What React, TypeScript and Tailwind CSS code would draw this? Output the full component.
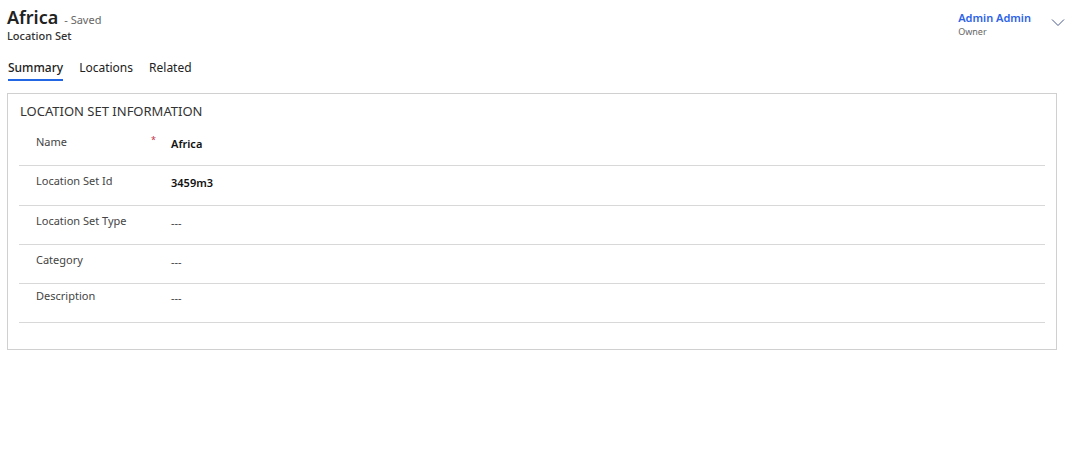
import React from "react";

const rows = [
  { label: "Name", value: "Africa", required: true, strong: true, h: "h-[39px] pt-[7px]" },
  { label: "Location Set Id", value: "3459m3", strong: true, h: "h-[40px] pt-[7px]" },
  { label: "Location Set Type", value: "---", h: "h-[39px] pt-[7px]" },
  { label: "Category", value: "---", h: "h-[39px] pt-[7px]" },
  { label: "Description", value: "---", h: "h-[39px] pt-[4px]" },
];

export default function App() {
  return (
    <div className="w-full h-[470px] bg-white text-[#333] font-['Noto_Sans',sans-serif]">
      <div className="flex justify-between pl-[7px] pr-[12px] pt-[5px]">
        <div>
          <div className="flex items-baseline gap-[6px]">
            <span className="text-[18px] font-semibold leading-[24px] text-[#222]">Africa</span>
            <span className="text-[11px] text-[#666]">- Saved</span>
          </div>
          <div className="text-[11px] font-medium leading-[14px] text-[#333]">Location Set</div>
        </div>
        <div className="flex items-start gap-[20px] pt-[6px]">
          <div>
            <div className="text-[11px] font-semibold leading-[14px] text-[#2b62e8]">Admin Admin</div>
            <div className="text-[9px] leading-[14px] text-[#666]">Owner</div>
          </div>
          <svg width="14" height="10" viewBox="0 0 14 10" className="mt-[7px]">
            <path d="M1 1.5 L7 7.5 L13 1.5" fill="none" stroke="#4a5a8a" strokeWidth="1" />
          </svg>
        </div>
      </div>

      <div className="flex gap-[16px] pl-[8px] mt-[16px] text-[12px] leading-[17px] text-[#222]">
        <div className="pb-[3px] border-b-2 border-[#2266e3] font-medium">Summary</div>
        <div className="pb-[3px]">Locations</div>
        <div className="pb-[3px]">Related</div>
      </div>

      <div className="ml-[7px] mt-[12px] w-[1050px] border border-[#d0d0d0] pb-[26px]">
        <div className="pl-[12px] pt-[8px] text-[13px] leading-[18px] text-[#333]">LOCATION SET INFORMATION</div>
        <div className="mx-[11px] mt-[7px]">
          {rows.map((r) => (
            <div key={r.label} className={`flex border-b border-[#d8d8d8] text-[11px] ${r.h}`}>
              <div className="w-[135px] ml-[17px] flex justify-between pr-[15px] text-[#444]">
                <span>{r.label}</span>
                {r.required && <span className="text-[9px] leading-[12px] text-[#c4314b]">*</span>}
              </div>
              <div className={r.strong ? "pt-[2px] font-semibold text-[#111]" : "pt-[2px] text-[#444]"}>{r.value}</div>
            </div>
          ))}
        </div>
      </div>
    </div>
  );
}
